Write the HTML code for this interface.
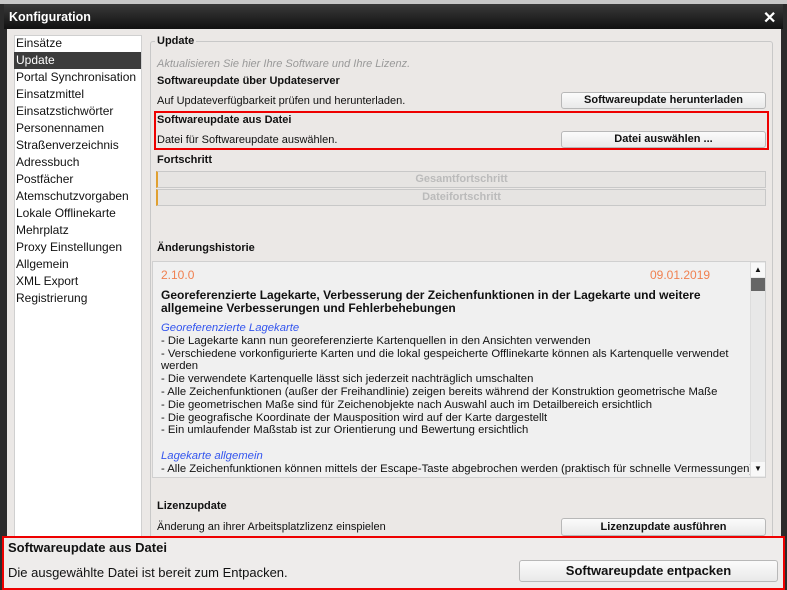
<!DOCTYPE html>
<html><head><meta charset="utf-8"><style>
*{margin:0;padding:0;box-sizing:border-box}
body{width:787px;height:590px;background:#2b2b2b;position:relative;overflow:hidden;font-family:"Liberation Sans",Arial,sans-serif;font-size:11px;color:#111}
.a{position:absolute;white-space:nowrap}
.btn{position:absolute;background:linear-gradient(#fbfbfb,#e9e9e9);border:1px solid #b8b8b8;border-radius:3px;font-weight:bold;font-size:11px;text-align:center}
.li{position:absolute;left:14px;width:127px;height:17px;line-height:17px;padding-left:2px;font-size:12px}
.t{position:absolute;left:8px;font-size:11.3px;white-space:nowrap;line-height:13px}
</style></head><body>
<div class="a" style="left:0;top:0;width:787px;height:4px;background:#c8c8c8"></div>
<div class="a" style="left:4px;top:4px;width:779px;height:25px;background:linear-gradient(#3a3a3a,#111)"></div>
<div class="a" style="left:9px;top:10px;color:#fff;font-weight:bold;font-size:12.5px">Konfiguration</div>
<div class="a" style="left:763px;top:8px;color:#fff;font-size:16px;font-weight:bold">✕</div>
<div class="a" style="left:7px;top:29px;width:774px;height:560px;background:#ebe8e6"></div>
<div class="a" style="left:14px;top:35px;width:128px;height:502px;background:#fff;border:1px solid #d0d0d0"></div>
<div class="li" style="top:35px">Einsätze</div>
<div class="li" style="top:52px;background:#3c3c3c;color:#fff">Update</div>
<div class="li" style="top:69px">Portal Synchronisation</div>
<div class="li" style="top:86px">Einsatzmittel</div>
<div class="li" style="top:103px">Einsatzstichwörter</div>
<div class="li" style="top:120px">Personennamen</div>
<div class="li" style="top:137px">Straßenverzeichnis</div>
<div class="li" style="top:154px">Adressbuch</div>
<div class="li" style="top:171px">Postfächer</div>
<div class="li" style="top:188px">Atemschutzvorgaben</div>
<div class="li" style="top:205px">Lokale Offlinekarte</div>
<div class="li" style="top:222px">Mehrplatz</div>
<div class="li" style="top:239px">Proxy Einstellungen</div>
<div class="li" style="top:256px">Allgemein</div>
<div class="li" style="top:273px">XML Export</div>
<div class="li" style="top:290px">Registrierung</div>
<div class="a" style="left:150px;top:41px;width:623px;height:500px;border:1px solid #c8c8c8;border-radius:3px"></div>
<div class="a" style="left:155px;top:35px;background:#ebe8e6;padding:0 2px;font-weight:bold">Update</div>
<div class="a" style="left:157px;top:58px;color:#999;font-style:italic">Aktualisieren Sie hier Ihre Software und Ihre Lizenz.</div>
<div class="a" style="left:157px;top:75px;font-weight:bold">Softwareupdate über Updateserver</div>
<div class="a" style="left:157px;top:95px">Auf Updateverfügbarkeit prüfen und herunterladen.</div>
<div class="btn" style="left:561px;top:92px;width:205px;height:17px;line-height:15px">Softwareupdate herunterladen</div>
<div class="a" style="left:154px;top:111px;width:615px;height:39px;border:2px solid #e00"></div>
<div class="a" style="left:157px;top:114px;font-weight:bold">Softwareupdate aus Datei</div>
<div class="a" style="left:157px;top:134px">Datei für Softwareupdate auswählen.</div>
<div class="btn" style="left:561px;top:131px;width:205px;height:17px;line-height:15px">Datei auswählen ...</div>
<div class="a" style="left:157px;top:154px;font-weight:bold">Fortschritt</div>
<div class="a" style="left:156px;top:171px;width:610px;height:17px;background:#e6e4e2;border:1px solid #c8c8c8;border-left:2px solid #e0a030;color:#bbb;font-weight:bold;text-align:center;line-height:15px">Gesamtfortschritt</div>
<div class="a" style="left:156px;top:189px;width:610px;height:17px;background:#e6e4e2;border:1px solid #c8c8c8;border-left:2px solid #e0a030;color:#bbb;font-weight:bold;text-align:center;line-height:15px">Dateifortschritt</div>
<div class="a" style="left:157px;top:242px;font-weight:bold">Änderungshistorie</div>
<div class="a" style="left:152px;top:261px;width:614px;height:217px;background:#f0f0f0;border:1px solid #d0d0d0;overflow:hidden">
 <div class="t" style="top:7px;color:#f08050;font-size:12px">2.10.0</div>
 <div class="t" style="top:7px;left:497px;color:#f08050;font-size:12px">09.01.2019</div>
 <div class="t" style="top:27px;font-weight:bold;font-size:12px">Georeferenzierte Lagekarte, Verbesserung der Zeichenfunktionen in der Lagekarte und weitere</div>
 <div class="t" style="top:40px;font-weight:bold;font-size:12px">allgemeine Verbesserungen und Fehlerbehebungen</div>
 <div class="t" style="top:60px;color:#3355ee;font-style:italic">Georeferenzierte Lagekarte</div>
 <div class="t" style="top:73px">- Die Lagekarte kann nun georeferenzierte Kartenquellen in den Ansichten verwenden</div>
 <div class="t" style="top:86px">- Verschiedene vorkonfigurierte Karten und die lokal gespeicherte Offlinekarte können als Kartenquelle verwendet</div>
 <div class="t" style="top:98px">werden</div>
 <div class="t" style="top:111px">- Die verwendete Kartenquelle lässt sich jederzeit nachträglich umschalten</div>
 <div class="t" style="top:124px">- Alle Zeichenfunktionen (außer der Freihandlinie) zeigen bereits während der Konstruktion geometrische Maße</div>
 <div class="t" style="top:137px">- Die geometrischen Maße sind für Zeichenobjekte nach Auswahl auch im Detailbereich ersichtlich</div>
 <div class="t" style="top:150px">- Die geografische Koordinate der Mausposition wird auf der Karte dargestellt</div>
 <div class="t" style="top:162px">- Ein umlaufender Maßstab ist zur Orientierung und Bewertung ersichtlich</div>
 <div class="t" style="top:188px;color:#3355ee;font-style:italic">Lagekarte allgemein</div>
 <div class="t" style="top:201px">- Alle Zeichenfunktionen können mittels der Escape-Taste abgebrochen werden (praktisch für schnelle Vermessungen)</div>
 <div class="a" style="left:597px;top:0;width:16px;height:216px;background:#e8e8e8;border-left:1px solid #ddd"></div>
 <div class="a" style="left:598px;top:1px;width:14px;height:14px;background:#f8f8f8;font-size:8px;text-align:center;line-height:14px">▲</div>
 <div class="a" style="left:598px;top:16px;width:14px;height:13px;background:#666"></div>
 <div class="a" style="left:598px;top:200px;width:14px;height:14px;background:#f8f8f8;font-size:8px;text-align:center;line-height:14px">▼</div>
</div>
<div class="a" style="left:157px;top:500px;font-weight:bold">Lizenzupdate</div>
<div class="a" style="left:157px;top:521px">Änderung an ihrer Arbeitsplatzlizenz einspielen</div>
<div class="btn" style="left:561px;top:518px;width:205px;height:18px;line-height:16px">Lizenzupdate ausführen</div>
<div class="a" style="left:2px;top:536px;width:783px;height:54px;background:#eeeceb;border:2px solid #e00"></div>
<div class="a" style="left:8px;top:540px;font-size:13px;font-weight:bold">Softwareupdate aus Datei</div>
<div class="a" style="left:8px;top:565px;font-size:13px">Die ausgewählte Datei ist bereit zum Entpacken.</div>
<div class="btn" style="left:519px;top:560px;width:259px;height:22px;line-height:20px;font-size:13px">Softwareupdate entpacken</div>
</body></html>
